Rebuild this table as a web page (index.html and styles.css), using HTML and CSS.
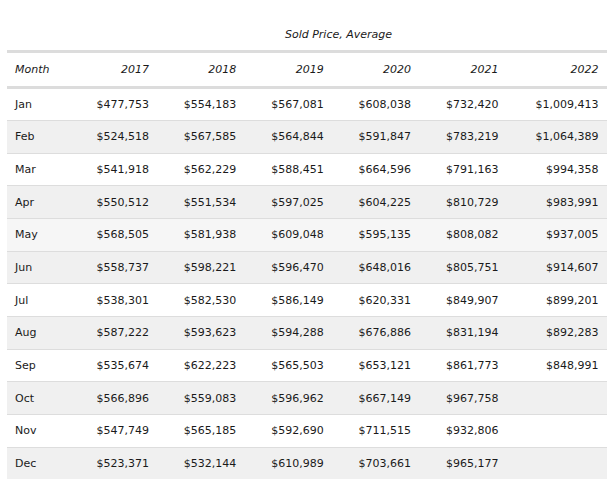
FILE: index.html
```html
<!DOCTYPE html>
<html>
<head>
<meta charset="utf-8">
<link rel="stylesheet" href="styles.css">
</head>
<body>
<table class="prices">
  <colgroup>
    <col class="c-month">
    <col class="c-year"><col class="c-year"><col class="c-year"><col class="c-year"><col class="c-year">
    <col class="c-last">
  </colgroup>
  <thead>
    <tr class="cap-row">
      <th class="cap-empty"></th>
      <th class="cap" colspan="6">Sold Price, Average</th>
    </tr>
    <tr class="head-row">
      <th class="left">Month</th>
      <th>2017</th><th>2018</th><th>2019</th><th>2020</th><th>2021</th><th>2022</th>
    </tr>
  </thead>
  <tbody>
    <tr><td class="left">Jan</td><td>$477,753</td><td>$554,183</td><td>$567,081</td><td>$608,038</td><td>$732,420</td><td>$1,009,413</td></tr>
    <tr class="alt"><td class="left">Feb</td><td>$524,518</td><td>$567,585</td><td>$564,844</td><td>$591,847</td><td>$783,219</td><td>$1,064,389</td></tr>
    <tr><td class="left">Mar</td><td>$541,918</td><td>$562,229</td><td>$588,451</td><td>$664,596</td><td>$791,163</td><td>$994,358</td></tr>
    <tr class="alt"><td class="left">Apr</td><td>$550,512</td><td>$551,534</td><td>$597,025</td><td>$604,225</td><td>$810,729</td><td>$983,991</td></tr>
    <tr class="hover"><td class="left">May</td><td>$568,505</td><td>$581,938</td><td>$609,048</td><td>$595,135</td><td>$808,082</td><td>$937,005</td></tr>
    <tr class="alt"><td class="left">Jun</td><td>$558,737</td><td>$598,221</td><td>$596,470</td><td>$648,016</td><td>$805,751</td><td>$914,607</td></tr>
    <tr><td class="left">Jul</td><td>$538,301</td><td>$582,530</td><td>$586,149</td><td>$620,331</td><td>$849,907</td><td>$899,201</td></tr>
    <tr class="alt"><td class="left">Aug</td><td>$587,222</td><td>$593,623</td><td>$594,288</td><td>$676,886</td><td>$831,194</td><td>$892,283</td></tr>
    <tr><td class="left">Sep</td><td>$535,674</td><td>$622,223</td><td>$565,503</td><td>$653,121</td><td>$861,773</td><td>$848,991</td></tr>
    <tr class="alt"><td class="left">Oct</td><td>$566,896</td><td>$559,083</td><td>$596,962</td><td>$667,149</td><td>$967,758</td><td></td></tr>
    <tr><td class="left">Nov</td><td>$547,749</td><td>$565,185</td><td>$592,690</td><td>$711,515</td><td>$932,806</td><td></td></tr>
    <tr class="alt last"><td class="left">Dec</td><td>$523,371</td><td>$532,144</td><td>$610,989</td><td>$703,661</td><td>$965,177</td><td></td></tr>
  </tbody>
</table>
</body>
</html>
```

FILE: styles.css
```css
html, body {
  margin: 0;
  padding: 0;
  background: #ffffff;
}

body {
  padding: 8px 7px;
  font-family: "DejaVu Sans", Verdana, sans-serif;
  font-size: 11px;
  color: #1a1a1a;
}

.prices {
  width: 600px;
  table-layout: fixed;
  border-collapse: collapse;
  border-spacing: 0;
}

.c-month { width: 63px; }
.c-year { width: 87.4px; }
.c-last { width: 100px; }

.prices th,
.prices td {
  padding: 0 8.5px;
  text-align: right;
  line-height: 13px;
  white-space: nowrap;
}

.prices .left {
  text-align: left;
  padding-left: 8px;
}

.prices th {
  font-style: italic;
  font-weight: normal;
}

.cap-row th {
  height: 42px;
  padding-top: 19.5px;
  padding-bottom: 9.5px;
  box-sizing: border-box;
  vertical-align: top;
}

.prices .cap {
  text-align: center;
}

.head-row th {
  height: 32.5px;
  border-top: 3px solid #dcdcdc;
  border-bottom: 3px solid #dcdcdc;
  vertical-align: middle;
}

.prices tbody td {
  height: 31.65px;
  vertical-align: middle;
  border-top: 1px solid #dddddd;
}

.prices tbody tr:first-child td {
  border-top: none;
}

.prices tbody tr.alt {
  background: #f0f0f0;
}

.prices tbody tr.hover {
  background: #f6f6f6;
}
```
